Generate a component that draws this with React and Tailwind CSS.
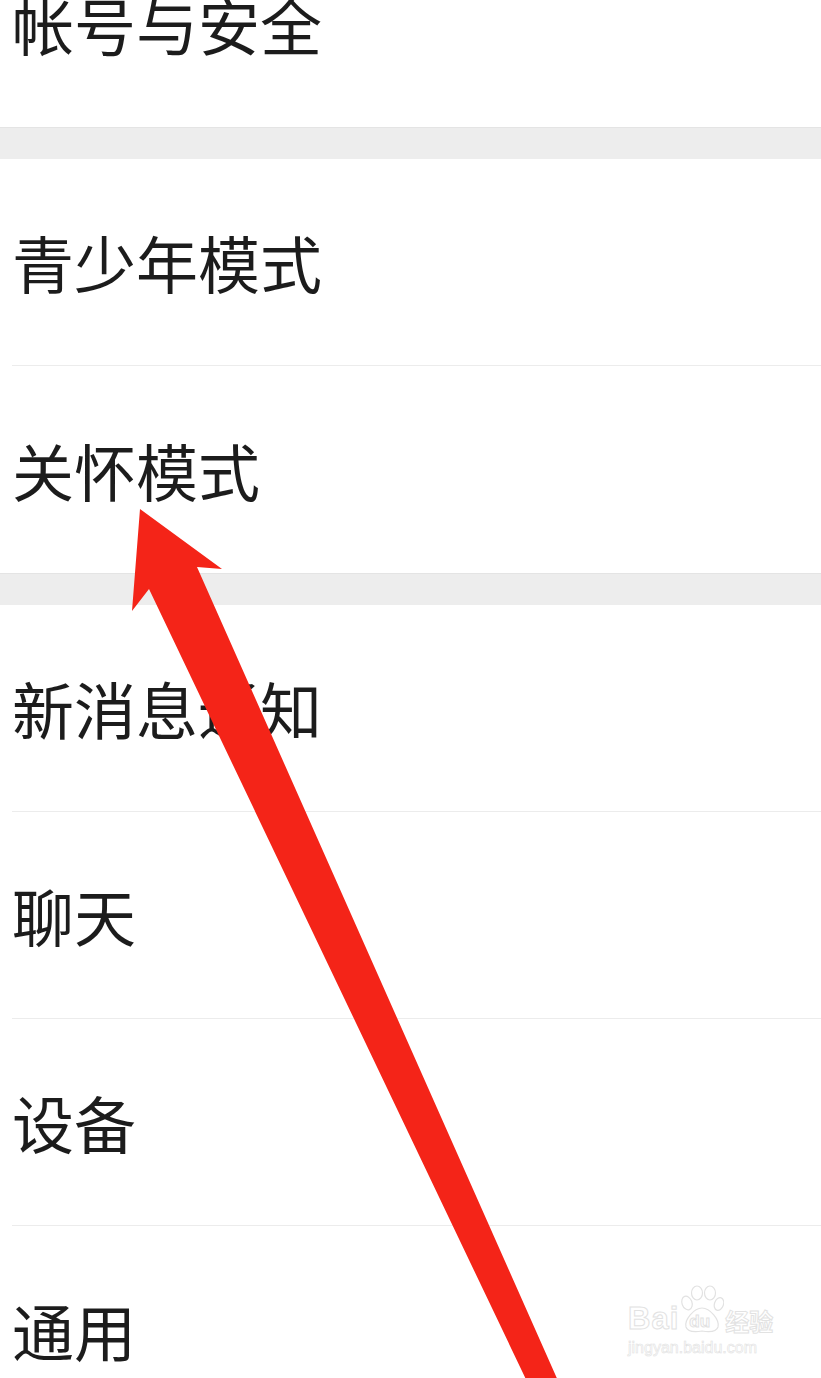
import React from "react";

const groups = [
  ["帐号与安全"],
  ["青少年模式", "关怀模式"],
  ["新消息通知", "聊天", "设备", "通用"],
];

const font = { fontFamily: '"Noto Sans CJK SC", "Noto Sans", sans-serif' };

const Row = ({ label, last }) => (
  <div className="pl-[12px]">
    <div
      className={
        "h-[207px] flex items-center text-[62px] leading-none text-[#1c1c1c] " +
        (last ? "" : "border-b border-[#ececec]")
      }
    >
      {label}
    </div>
  </div>
);

const Arrow = () => (
  <svg
    className="absolute left-0 top-0 pointer-events-none"
    width="821"
    height="1378"
    viewBox="0 0 821 1378"
  >
    <polygon
      fill="#f42418"
      points="140,509 222,569 197,567 563,1392 532,1392 149,589 132,611"
    />
  </svg>
);

const Watermark = () => (
  <div className="absolute left-[628px] top-[1284px] flex flex-col text-white [-webkit-text-stroke:1px_#e2e2e2]">
    <div className="flex items-end">
      <span className="text-[31px] font-bold leading-none tracking-[1px]" style={{ fontFamily: '"Liberation Sans", Arial, sans-serif' }}>
        Bai
      </span>
      <div className="relative w-[44px] h-[50px] mx-[1px]">
        <svg width="44" height="50" viewBox="0 0 44 50" className="absolute left-0 top-0">
          <g fill="#fff" stroke="#e2e2e2" strokeWidth="1.2">
            <ellipse cx="7" cy="19" rx="5" ry="7" transform="rotate(-20 7 19)" />
            <ellipse cx="17" cy="9" rx="5.5" ry="7" />
            <ellipse cx="30" cy="9" rx="5.5" ry="7" />
            <ellipse cx="39" cy="20" rx="4.5" ry="6.5" transform="rotate(20 39 20)" />
            <path d="M22 24 C30 24 40 36 38 43 C36 49 28 48 22 47 C16 48 8 49 6 43 C4 36 14 24 22 24 Z" />
          </g>
        </svg>
        <span
          className="absolute left-[9px] top-[29px] text-[17px] font-bold leading-none"
          style={{ fontFamily: '"Liberation Sans", Arial, sans-serif' }}
        >
          du
        </span>
      </div>
      <span className="text-[24px] font-bold leading-none mb-[1px]" style={font}>
        经验
      </span>
    </div>
    <span
      className="text-[16px] leading-none mt-[6px] [-webkit-text-stroke:0.6px_#e2e2e2]"
      style={{ fontFamily: '"Liberation Sans", Arial, sans-serif' }}
    >
      jingyan.baidu.com
    </span>
  </div>
);

export default function App() {
  return (
    <div className="relative w-[821px] h-[1378px] overflow-hidden bg-white" style={font}>
      <div className="-mt-[80px]">
        {groups.map((items, gi) => (
          <div key={gi}>
            {gi > 0 && <div className="h-[32px] bg-[#ededed] border-t border-[#e4e4e4]" />}
            {items.map((label, i) => (
              <Row key={label} label={label} last={i === items.length - 1} />
            ))}
          </div>
        ))}
      </div>
      <Arrow />
      <Watermark />
    </div>
  );
}
